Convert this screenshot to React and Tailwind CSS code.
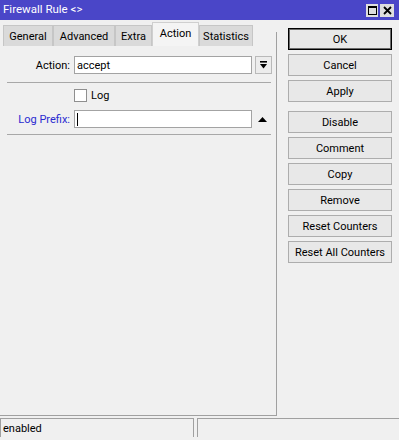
import React from "react";

const tabs = [
  { label: "General", w: "w-[50px]" },
  { label: "Advanced", w: "w-[62px]" },
  { label: "Extra", w: "w-[37px]" },
  { label: "Action", w: "w-[47px]", active: true },
  { label: "Statistics", w: "w-[54px]" },
];

const buttons = [
  ["OK", true],
  ["Cancel"],
  ["Apply"],
  ["Disable", false, true],
  ["Comment"],
  ["Copy"],
  ["Remove"],
  ["Reset Counters"],
  ["Reset All Counters"],
];

function Btn({ label, def, gapTop }) {
  return (
    <div
      className={
        "w-[104px] h-[22px] flex items-center justify-center bg-[#e8e8e8] text-black " +
        (def
          ? "border border-black shadow-[inset_0_0_0_1px_#6a6a6a]"
          : "border border-[#adadad]") +
        (gapTop ? " mt-[5px]" : "")
      }
    >
      {label}
    </div>
  );
}

export default function App() {
  return (
    <div className="w-[399px] h-[440px] bg-[#f0f0f0] flex flex-col font-[Roboto,sans-serif] text-[11px] text-black leading-none overflow-hidden">
      {/* Title bar */}
      <div className="h-[20px] bg-[#4a46c8] flex items-center justify-between pl-[3px] pr-[5px]">
        <span className="text-white text-[11.5px]">Firewall Rule &lt;&gt;</span>
        <div className="flex gap-[2px] mt-[1px]">
          <div className="w-[12px] h-[13px] bg-[#dedede] flex items-center justify-center">
            <div className="w-[9px] h-[9px] border border-black border-t-2" />
          </div>
          <div className="w-[14px] h-[13px] bg-[#dedede] flex items-center justify-center">
            <svg width="9" height="9" viewBox="0 0 9 9">
              <path d="M1 1 L8 8 M8 1 L1 8" stroke="black" strokeWidth="1.8" />
            </svg>
          </div>
        </div>
      </div>

      {/* Body */}
      <div className="flex flex-1">
        <div className="w-[277px] flex flex-col pt-[2px]">
          {/* Tabs */}
          <div className="h-[24px] flex items-end pl-[3px] pr-[0px] border-r border-[#a0a0a0] [border-image:linear-gradient(to_bottom,transparent_10px,#a0a0a0_10px)_1]">
            {tabs.map((t) => (
              <div
                key={t.label}
                className={
                  t.w +
                  " flex items-center justify-center border border-b-0 " +
                  (t.active
                    ? "h-[24px] bg-[#f4f4f4] border-[#cfcfcf] pb-[2px]"
                    : "h-[21px] bg-[#dadada] border-[#c6c6c6]")
                }
              >
                {t.label}
              </div>
            ))}
          </div>
          {/* Panel */}
          <div className="flex-1 border-r border-b border-[#a0a0a0] flex flex-col">
            <div className="mt-[10px] h-[18px] flex items-center">
              <div className="w-[71px] text-right pr-[1px]">Action:</div>
              <div className="ml-[3px] w-[178px] h-[18px] bg-white border border-[#a3a3a3] flex items-center pl-[2px]">
                accept
              </div>
              <div className="ml-[3px] w-[17px] h-[18px] border border-[#b9b9b9] bg-[#ececec] flex items-center justify-center">
                <svg width="7" height="8" viewBox="0 0 7 8">
                  <rect x="0" y="0" width="7" height="1.6" fill="black" />
                  <path d="M0 3 H7 L3.5 7.5 Z" fill="black" />
                </svg>
              </div>
            </div>
            <div className="mt-[8px] ml-[7px] w-[264px] h-px bg-[#a8a8a8]" />
            <div className="mt-[6px] h-[13px] flex items-center">
              <div className="ml-[74px] w-[13px] h-[13px] bg-white border border-[#8f8f8f]" />
              <span className="ml-[4px]">Log</span>
            </div>
            <div className="mt-[8px] h-[18px] flex items-center">
              <div className="w-[71px] text-right pr-[1px] text-[#2a2ad0]">Log Prefix:</div>
              <div className="ml-[3px] w-[178px] h-[18px] bg-white border border-[#a3a3a3] flex items-center pl-[2px]">
                <div className="w-px h-[13px] bg-black" />
              </div>
              <svg className="ml-[6px]" width="9" height="5" viewBox="0 0 9 5">
                <path d="M0 5 L4.5 0 L9 5 Z" fill="black" />
              </svg>
            </div>
            <div className="mt-[6px] ml-[7px] w-[264px] h-px bg-[#a8a8a8]" />
          </div>
        </div>

        {/* Buttons */}
        <div className="pl-[11px] pt-[8px] flex flex-col gap-[4px]">
          {buttons.map(([l, d, g]) => (
            <Btn key={l} label={l} def={d} gapTop={g} />
          ))}
        </div>
      </div>

      {/* Status bar */}
      <div className="h-[24px] pt-[2px] pb-[3px] flex gap-[3px]">
        <div className="w-[194px] border-t border-l border-r border-[#a0a0a0] flex items-center pl-[2px]">
          enabled
        </div>
        <div className="flex-1 border-t border-l border-[#a0a0a0]" />
      </div>
    </div>
  );
}
